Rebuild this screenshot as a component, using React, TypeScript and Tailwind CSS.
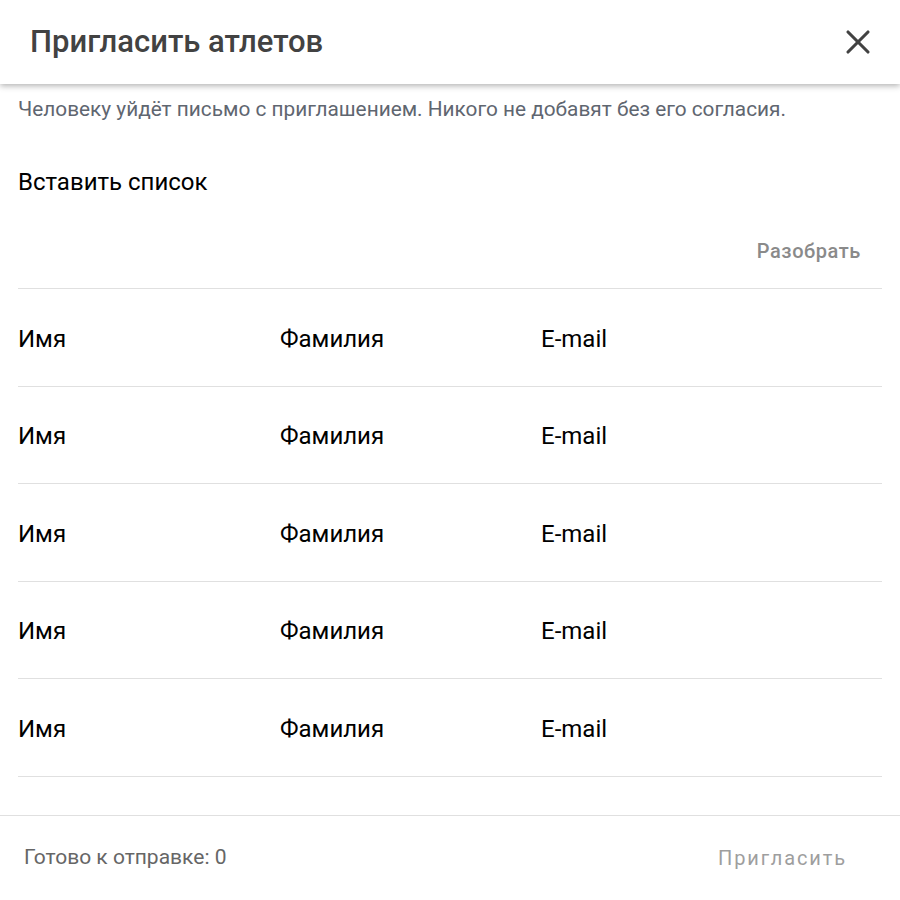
import { X } from "lucide-react";

const ROWS = [0, 1, 2, 3, 4];

const Row = () => (
  <div className="grid h-[97.5px] grid-cols-[262px_261px_1fr] items-center border-b border-[#e0e0e0] pt-[3px] text-[24px] text-black">
    <span>Имя</span>
    <span>Фамилия</span>
    <span>E-mail</span>
  </div>
);

export default function App() {
  return (
    <div className="flex h-[900px] w-[900px] flex-col bg-white font-['Roboto',sans-serif]">
      <header className="relative z-10 flex h-[84px] shrink-0 items-center justify-between bg-white pl-[30px] pr-[22px] shadow-[0_2px_6px_rgba(0,0,0,0.3)]">
        <h1 className="text-[31px] font-medium text-[#424242]">Пригласить атлетов</h1>
        <X className="h-10 w-10 text-[#424242]" strokeWidth={1.9} />
      </header>

      <div className="flex flex-1 flex-col px-[18px]">
        <p className="mt-[13px] text-[20.8px] leading-[24px] text-[#5f6670]">
          Человеку уйдёт письмо с приглашением. Никого не добавят без его согласия.
        </p>
        <p className="mt-[47px] text-[24px] leading-[28px] text-black">Вставить список</p>
        <div className="mt-[40px] flex justify-end pr-[21px]">
          <button className="text-[20px] font-medium tracking-[0.6px] text-[#8a8a8a]">Разобрать</button>
        </div>
        <div className="mt-[22px] border-b border-[#e0e0e0]" />
        {ROWS.map((r) => (
          <Row key={r} />
        ))}
      </div>

      <footer className="flex h-[85px] shrink-0 items-center justify-between border-t border-[#e0e0e0] pl-[24px] pr-[53px]">
        <span className="text-[21px] text-[#666]">Готово к отправке: 0</span>
        <button className="text-[20px] tracking-[1.9px] text-[#9e9e9e]">Пригласить</button>
      </footer>
    </div>
  );
}
